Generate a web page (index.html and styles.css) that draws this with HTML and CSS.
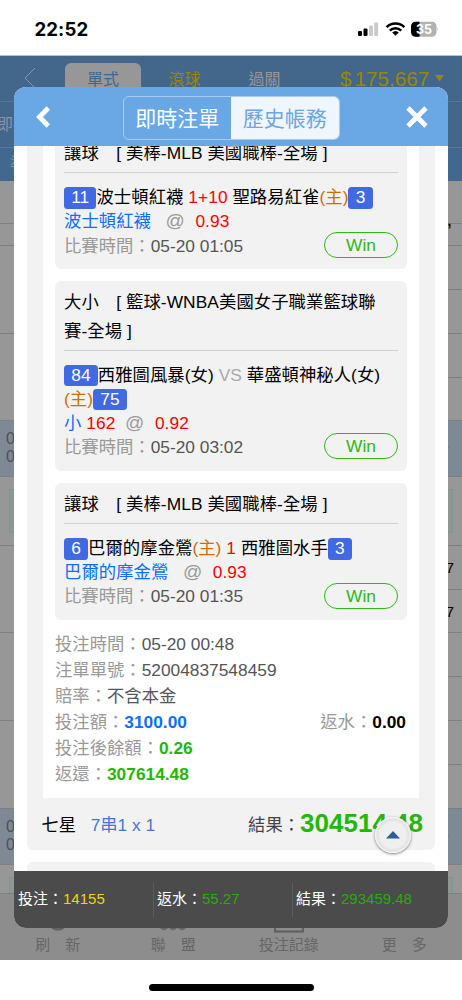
FILE: index.html
```html
<!DOCTYPE html>
<html lang="zh-Hant">
<head>
<meta charset="utf-8">
<title>歷史帳務</title>
<link rel="stylesheet" href="styles.css">
</head>
<body>
<div class="screen">
  <header class="status">
    <span class="clock">22:52</span>
    <svg class="status-icons" width="82" height="18" viewBox="0 0 82 18">
      <rect x="1" y="11" width="4" height="5" rx="1" fill="#000"/>
      <rect x="6.5" y="8.5" width="4" height="7.5" rx="1" fill="#000"/>
      <rect x="12" y="5.5" width="4" height="10.5" rx="1" fill="#cbcbcb"/>
      <rect x="17.2" y="2.5" width="4" height="13.500" rx="1" fill="#cbcbcb"/>
      <path d="M29.600 7.200a12.600 12.600 0 0 1 17.800 0M32.800 10.600a8.100 8.100 0 0 1 11.400 0" fill="none" stroke="#000" stroke-width="2.500"/>
      <path d="M38.500 15.800l-3.300-3.300a4.800 4.800 0 0 1 6.600 0z" fill="#000"/>
      <path d="M58.500 1.800H75a4.500 4.500 0 0 1 4.500 4.500v6a4.500 4.500 0 0 1-4.500 4.500H58.500z" fill="#b2b2b2"/>
      <path d="M62.500 1.800h-4a4.500 4.500 0 0 0-4.500 4.500v6a4.500 4.500 0 0 0 4.500 4.500h4z" fill="#000"/>
      <path d="M80.500 7.200q1.500 2 0 4z" fill="#b2b2b2"/>
      <text class="battery-text" x="67" y="13.600" text-anchor="middle">35</text>
    </svg>
  </header>

  <div class="backdrop">
    <nav class="topbar">
      <svg class="top-back" width="12" height="22" viewBox="0 0 12 22"><path d="M11 1L1 11l10 10" fill="none" stroke="#8795a4" stroke-width="1"/></svg>
      <span class="top-tab active">單式</span>
      <span class="top-tab live">滾球</span>
      <span class="top-tab parlay">過關</span>
      <span class="balance"><span class="currency">$</span>175,667</span>
      <svg class="caret" width="10" height="7" viewBox="0 0 10 7"><path d="M0 0h9L4.500 6.500z" fill="#998700"/></svg>
    </nav>
    <div class="subbar">即將</div>
    <div class="subhead">準</div>
    <div class="row r42"></div>
    <div class="row r22"><span class="right-comma">,</span></div>
    <div class="row r88"><i class="half"></i></div>
    <div class="row r87"><i class="half"></i></div>
    <div class="row team"><div>0<br>0</div><span class="dash">-</span></div>
    <div class="row banner"><i class="promo"></i></div>
    <div class="row r87"><i class="half">7</i><i class="lower">7</i></div>
    <div class="row r88"><i class="half"></i></div>
    <div class="row r88"><i class="half"></i></div>
    <div class="row team"><div>0<br>0</div><span class="dash">-</span></div>
    <div class="row banner2"><i class="promo"></i></div>
    <nav class="toolbar">
      <div class="tool"><svg width="30" height="30" viewBox="0 0 30 30"><circle cx="15" cy="18" r="8.500" fill="none" stroke="#616161" stroke-width="2.500"/></svg>刷　新</div>
      <div class="tool"><svg width="30" height="30" viewBox="0 0 30 30"><g fill="#666"><circle cx="6" cy="22.500" r="4.700"/><circle cx="15" cy="22.500" r="4.700"/><circle cx="24" cy="22.500" r="4.700"/></g></svg>聯　盟</div>
      <div class="tool"><svg width="30" height="30" viewBox="0 0 30 30"><rect x="1" y="2" width="28" height="26.500" fill="none" stroke="#616161" stroke-width="2.200"/></svg>投注記錄</div>
      <div class="tool"><svg width="30" height="30"></svg>更　多</div>
    </nav>
  </div>

  <div class="home"><div class="home-bar"></div></div>

  <section class="modal">
    <header class="modal-head">
      <svg class="back" width="16" height="24" viewBox="0 0 16 24"><path d="M13.300 3L4.500 12l8.800 9" fill="none" stroke="#fff" stroke-width="4.800"/></svg>
      <div class="tabs"><span class="tab">即時注單</span><span class="tab selected">歷史帳務</span></div>
      <svg width="22" height="22" viewBox="0 0 22 22"><path d="M2 2l18 18M20 2L2 20" fill="none" stroke="#fff" stroke-width="4.800"/></svg>
    </header>

    <div class="scroll">
      <article class="ticket">
        <div class="ticket-body">
          <div class="bet">
            <h2 class="league">讓球　[ 美棒-MLB 美國職棒-全場 ]</h2>
            <p class="line"><span class="score">11</span>波士頓紅襪 <span class="red">1+10</span> 聖路易紅雀<span class="host">(主)</span><span class="score">3</span></p>
            <p class="line"><span class="pick">波士頓紅襪&nbsp;</span><span class="at">@</span><span class="red">0.93</span></p>
            <div class="line time"><span><span class="label">比賽時間：</span>05-20 01:05</span><span class="win">Win</span></div>
          </div>
          <div class="bet">
            <h2 class="league">大小　[ 籃球-WNBA美國女子職業籃球聯<br>賽-全場 ]</h2>
            <p class="line"><span class="score">84</span>西雅圖風暴(女) <span class="versus">VS</span> 華盛頓神秘人(女)<br><span class="host">(主)</span><span class="score">75</span></p>
            <p class="line"><span class="pick">小</span> <span class="red">162</span><span class="at">@</span><span class="red">0.92</span></p>
            <div class="line time"><span><span class="label">比賽時間：</span>05-20 03:02</span><span class="win">Win</span></div>
          </div>
          <div class="bet">
            <h2 class="league">讓球　[ 美棒-MLB 美國職棒-全場 ]</h2>
            <p class="line"><span class="score">6</span>巴爾的摩金鶯<span class="host">(主)</span> <span class="red">1</span> 西雅圖水手<span class="score">3</span></p>
            <p class="line"><span class="pick">巴爾的摩金鶯&nbsp;</span><span class="at">@</span><span class="red">0.93</span></p>
            <div class="line time"><span><span class="label">比賽時間：</span>05-20 01:35</span><span class="win">Win</span></div>
          </div>
          <div class="details">
            <div class="detail"><span><span class="label">投注時間：</span>05-20 00:48</span></div>
            <div class="detail"><span><span class="label">注單單號：</span>52004837548459</span></div>
            <div class="detail"><span><span class="label">賠率：</span>不含本金</span></div>
            <div class="detail"><span><span class="label">投注額：</span><b class="stake">3100.00</b></span><span><span class="label">返水：</span><b class="rebate">0.00</b></span></div>
            <div class="detail"><span><span class="label">投注後餘額：</span><b class="gain">0.26</b></span></div>
            <div class="detail"><span><span class="label">返還：</span><b class="gain">307614.48</b></span></div>
          </div>
        </div>
        <footer class="ticket-foot">
          <span>七星</span><span class="combo">7串1 x 1</span>
          <span class="result">結果：</span><b class="total">304514.48</b>
        </footer>
      </article>
      <article class="ticket next"></article>
    </div>

    <footer class="summary">
      <div class="sum">投注：<span class="yellow">14155</span></div>
      <div class="sum">返水：<span class="green">55.27</span></div>
      <div class="sum">結果：<span class="green">293459.48</span></div>
    </footer>

    <div class="to-top"><svg width="14" height="8" viewBox="0 0 14 8"><path d="M7 0l7 7.500H0z" fill="#2a5f9e"/></svg></div>
  </section>
</div>
</body>
</html>
```

FILE: styles.css
```css
* { box-sizing: border-box; }
body {
  margin: 0;
  background: #fff;
  color: #000;
  font-family: "Liberation Sans", "Noto Sans CJK TC", sans-serif;
  font-size: 17.33px;
}
h2, p { margin: 0; font-weight: 400; font-size: inherit; }
i { font-style: normal; }
svg { flex: none; display: block; }

.screen { position: relative; width: 462px; height: 1000px; overflow: hidden; display: flex; flex-direction: column; }

.status { height: 56px; flex: none; display: flex; justify-content: space-between; align-items: center; padding: 3px 23px 0 34.5px; border-bottom: 1px solid #b3c4d7; }
.clock { font: 700 18.6px/20px Inter, sans-serif; letter-spacing: 0.1px; }
.battery-text { font: 700 12.5px Inter, sans-serif; fill: #fff; }

/* dimmed page under the dialog */
.backdrop { height: 904px; flex: none; display: flex; flex-direction: column; background: #979797; overflow: hidden; }
.backdrop > * { flex: none; }
.topbar { height: 46px; background: #42678b; border-bottom: 1px solid #56779a; display: flex; align-items: flex-start; padding: 7px 0 0 24px; font-size: 16px; line-height: 33px; color: #969696; }
.top-back { margin: 4px 29px 0 0; }
.top-tab { width: 76px; text-align: center; }
.top-tab.active { background: #979797; color: #42678b; border-radius: 6px; }
.top-tab.live { color: #998700; margin-left: 4.500px; width: 78px; }
.top-tab.parlay { margin-left: 3px; margin-right: 37.500px; }
.balance { color: #998700; font-size: 20.700px; line-height: 31px; }
.currency { margin-right: 3px; }
.caret { margin: 12px 0 0 6px; }
.subbar { height: 46px; background: #42678b; border-bottom: 1px solid #56779a; color: #8795a4; font-size: 16px; line-height: 45px; text-indent: -3px; }
.subhead { height: 33px; background: #42688f; color: #8795a4; font-size: 16px; line-height: 32px; padding-left: 10px; }
.row { border-bottom: 1px solid #808080; display: flex; flex-direction: column; align-items: flex-end; }
.r42 { height: 43px; }
.r22 { height: 22px; }
.r87 { height: 87px; }
.r88 { height: 88px; }
.half, .lower { width: 448px; height: 44px; text-align: right; padding-right: 8px; line-height: 43px; font-size: 15px; }
.half { border-bottom: 1px solid #808080; }
.right-comma { font-weight: 700; font-size: 14px; line-height: 1; margin: -10px 10.500px 0 0; }
.team { height: 56px; background: #7d8a95; color: #505050; font-size: 16px; line-height: 18px; padding: 9px 13px 0 6px; flex-direction: row; align-items: flex-start; justify-content: space-between; }
.dash { color: #426fa8; line-height: 34px; }
.banner { height: 69px; padding: 12px 9px 0; }
.banner2 { height: 29px; padding: 12px 9px 0; overflow: hidden; }
.promo { width: 100%; height: 44px; flex: none; border: 1px solid #779a8b; background: #8f9793; }
.toolbar { height: 67px; background: #8d8d8d; display: flex; }
.tool { flex: 1; display: flex; flex-direction: column; align-items: center; padding-top: 9px; font-size: 15px; line-height: 24px; color: #666; }

.home { flex: 1; display: flex; justify-content: center; padding-top: 24px; }
.home-bar { width: 165px; height: 6.500px; border-radius: 4px; background: #000; }

.modal { position: absolute; left: 14px; top: 87px; width: 434px; height: 841px; border-radius: 12px; overflow: hidden; background: #fff; display: flex; flex-direction: column; }
.modal-head { height: 59px; flex: none; background: #6aa7e5; display: flex; align-items: center; justify-content: space-between; padding: 1px 20px 0 21px; }
.tabs { width: 217px; height: 44px; display: flex; border: 1px solid #a9cdf2; border-radius: 6px; overflow: hidden; margin: 2px 0 0 5px; }
.tab { flex: 1; text-align: center; color: #fff; font-size: 21px; line-height: 43px; }
.tab.selected { background: #f0f6fd; color: #6aa7e5; }

.scroll { flex: 1; min-height: 0; overflow: hidden; padding: 0 13px; }
.ticket { margin-top: -14px; background: #f2f2f2; border-radius: 6px; padding: 0 16px; }
.ticket.next { margin-top: 12px; height: 80px; }
.ticket-body { background: #fff; padding: 0 12px 10.500px; height: 666px; }
.bet { background: #f2f2f2; border-radius: 6px; padding: 7px 9px 11.400px; margin-bottom: 12px; }
.league { line-height: 28.700px; padding-bottom: 4.500px; margin-bottom: 12px; border-bottom: 1px solid #d0d0d0; letter-spacing: 0.08px; }
.bet:nth-child(2) .league { line-height: 28.500px; }
.line { line-height: 24.200px; white-space: nowrap; letter-spacing: 0.06px; }
.score { display: inline-block; background: #4169e1; color: #fff; border-radius: 3.500px; padding: 0 7.200px; line-height: 21.500px; }
.red { color: #f00; }
.host { color: #cc6f00; }
.pick, .stake { color: #0f6dff; }
.at { color: #999; font-size: 19px; line-height: 20px; margin: 0 10.500px 0 9.700px; }
.versus { color: #aaa; }
.label { color: #999; }
.time { display: flex; justify-content: space-between; align-items: center; height: 24.200px; color: #555; letter-spacing: 0; }
.win { width: 74px; height: 26px; border: 1.400px solid #2cba12; border-radius: 13px; color: #2cba12; text-align: center; line-height: 24px; margin-top: -2px; }
.details { padding: 0 1px 0 0; line-height: 26px; margin-top: -1px; color: #555; }
.detail { display: flex; justify-content: space-between; height: 26px; }
.gain, .total { color: #24b70a; }
.rebate { color: #000; }
.ticket-foot { height: 52px; display: flex; align-items: center; margin: 0 -4px 0 -1.500px; padding-bottom: 2px; }
.combo { color: #4972e3; margin-left: 14.500px; }
.result { color: #444; margin-left: auto; }
.total { font-size: 26px; line-height: 50px; margin-top: -1px; }

.summary { height: 57px; flex: none; background: #4b4b4b; color: #fff; display: flex; align-items: center; font-size: 15px; }
.sum { width: 139px; height: 34px; line-height: 31px; padding-left: 4px; }
.sum + .sum { border-left: 1px solid #5c5c5c; padding-left: 3px; }
.yellow { color: #f2d600; }
.green { color: #24ad0a; }
.to-top { position: absolute; left: 361px; top: 730px; width: 36px; height: 36px; border-radius: 50%; background: radial-gradient(circle, #efefef 50%, #e2e2e2 62%, #f5f5f5 70%); box-shadow: 0 1px 3px rgba(0, 0, 0, 0.5); display: flex; align-items: center; justify-content: center; }
```
